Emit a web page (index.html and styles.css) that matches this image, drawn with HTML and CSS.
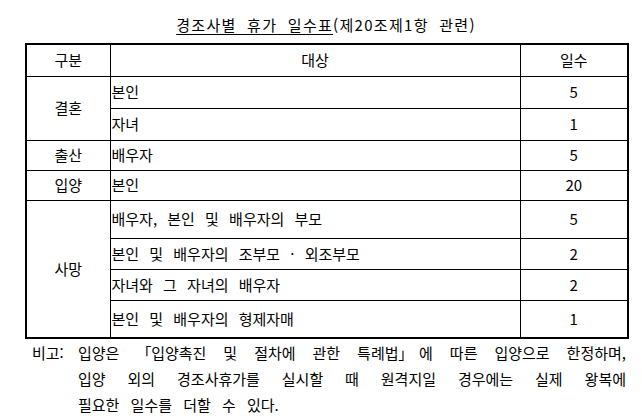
FILE: index.html
```html
<!DOCTYPE html>
<html lang="ko">
<head>
<meta charset="utf-8">
<title>경조사별 휴가 일수표</title>
<link rel="stylesheet" href="styles.css">
</head>
<body>
<div class="page">
  <h1 class="title"><span class="u">경조사별 휴가 일수표</span>(제20조제1항 관련)</h1>
  <table class="days">
    <colgroup>
      <col class="c1">
      <col class="c2">
      <col class="c3">
    </colgroup>
    <thead>
      <tr class="h32"><th>구분</th><th>대상</th><th>일수</th></tr>
    </thead>
    <tbody>
      <tr class="h32"><td class="cat" rowspan="2">결혼</td><td class="who">본인</td><td class="num">5</td></tr>
      <tr class="h32"><td class="who">자녀</td><td class="num">1</td></tr>
      <tr class="h30"><td class="cat">출산</td><td class="who">배우자</td><td class="num">5</td></tr>
      <tr class="h30"><td class="cat">입양</td><td class="who">본인</td><td class="num">20</td></tr>
      <tr class="h38"><td class="cat" rowspan="4">사망</td><td class="who">배우자, 본인 및 배우자의 부모</td><td class="num">5</td></tr>
      <tr class="h31"><td class="who">본인 및 배우자의 조부모 · 외조부모</td><td class="num">2</td></tr>
      <tr class="h31"><td class="who">자녀와 그 자녀의 배우자</td><td class="num">2</td></tr>
      <tr class="h38"><td class="who">본인 및 배우자의 형제자매</td><td class="num">1</td></tr>
    </tbody>
  </table>
  <div class="note">
    <div class="label">비고:</div>
    <div class="body">
      <div class="line just">입양은 <span class="open">「</span>입양촉진 및 절차에 관한 특례법<span class="close">」</span>에 따른 입양으로 한정하며,</div>
      <div class="line just">입양 외의 경조사휴가를 실시할 때 원격지일 경우에는 실제 왕복에</div>
      <div class="line">필요한 일수를 더할 수 있다.</div>
    </div>
  </div>
</div>
</body>
</html>
```
FILE: styles.css
```css
html, body {
  margin: 0;
  padding: 0;
  background: #ffffff;
}
body {
  font-family: "Noto Sans CJK KR", "Noto Sans", sans-serif;
  font-size: 15px;
  font-weight: 400;
  color: #000000;
}
.page {
  padding-left: 25px;
  width: 602px;
}
.title {
  margin: 15px 0 8px 0;
  font-size: 15px;
  font-weight: 400;
  line-height: 20px;
  text-align: center;
  letter-spacing: 1.3px;
  word-spacing: 5px;
}
.title .u {
  text-decoration: underline;
  text-underline-offset: 3px;
  text-decoration-thickness: 1px;
}
.days {
  width: 602px;
  border-collapse: collapse;
  border: 2px solid #000;
  table-layout: fixed;
}
.c1 { width: 84px; }
.c2 { width: 410px; }
.c3 { width: 108px; }
.days th, .days td {
  border: 1px solid #000;
  padding: 0;
  font-weight: 400;
  line-height: 18px;
}
.days th {
  text-align: center;
}
.h32 { height: 32px; }
.h31 { height: 31px; }
.h30 { height: 30px; }
.h38 { height: 38px; }
.cat {
  text-align: center;
}
.days td.who {
  text-align: left;
  padding-left: 1px;
  word-spacing: 6px;
}
.num {
  text-align: center;
}
.note {
  display: flex;
  margin-top: 1px;
  line-height: 26px;
  word-spacing: 7px;
}
.label {
  width: 46px;
  padding-left: 7px;
  flex: none;
}
.body {
  width: 548px;
}
.open {
  margin-right: -6px;
}
.close {
  margin-left: -6px;
}
.line.just {
  text-align: justify;
  text-align-last: justify;
}
```
